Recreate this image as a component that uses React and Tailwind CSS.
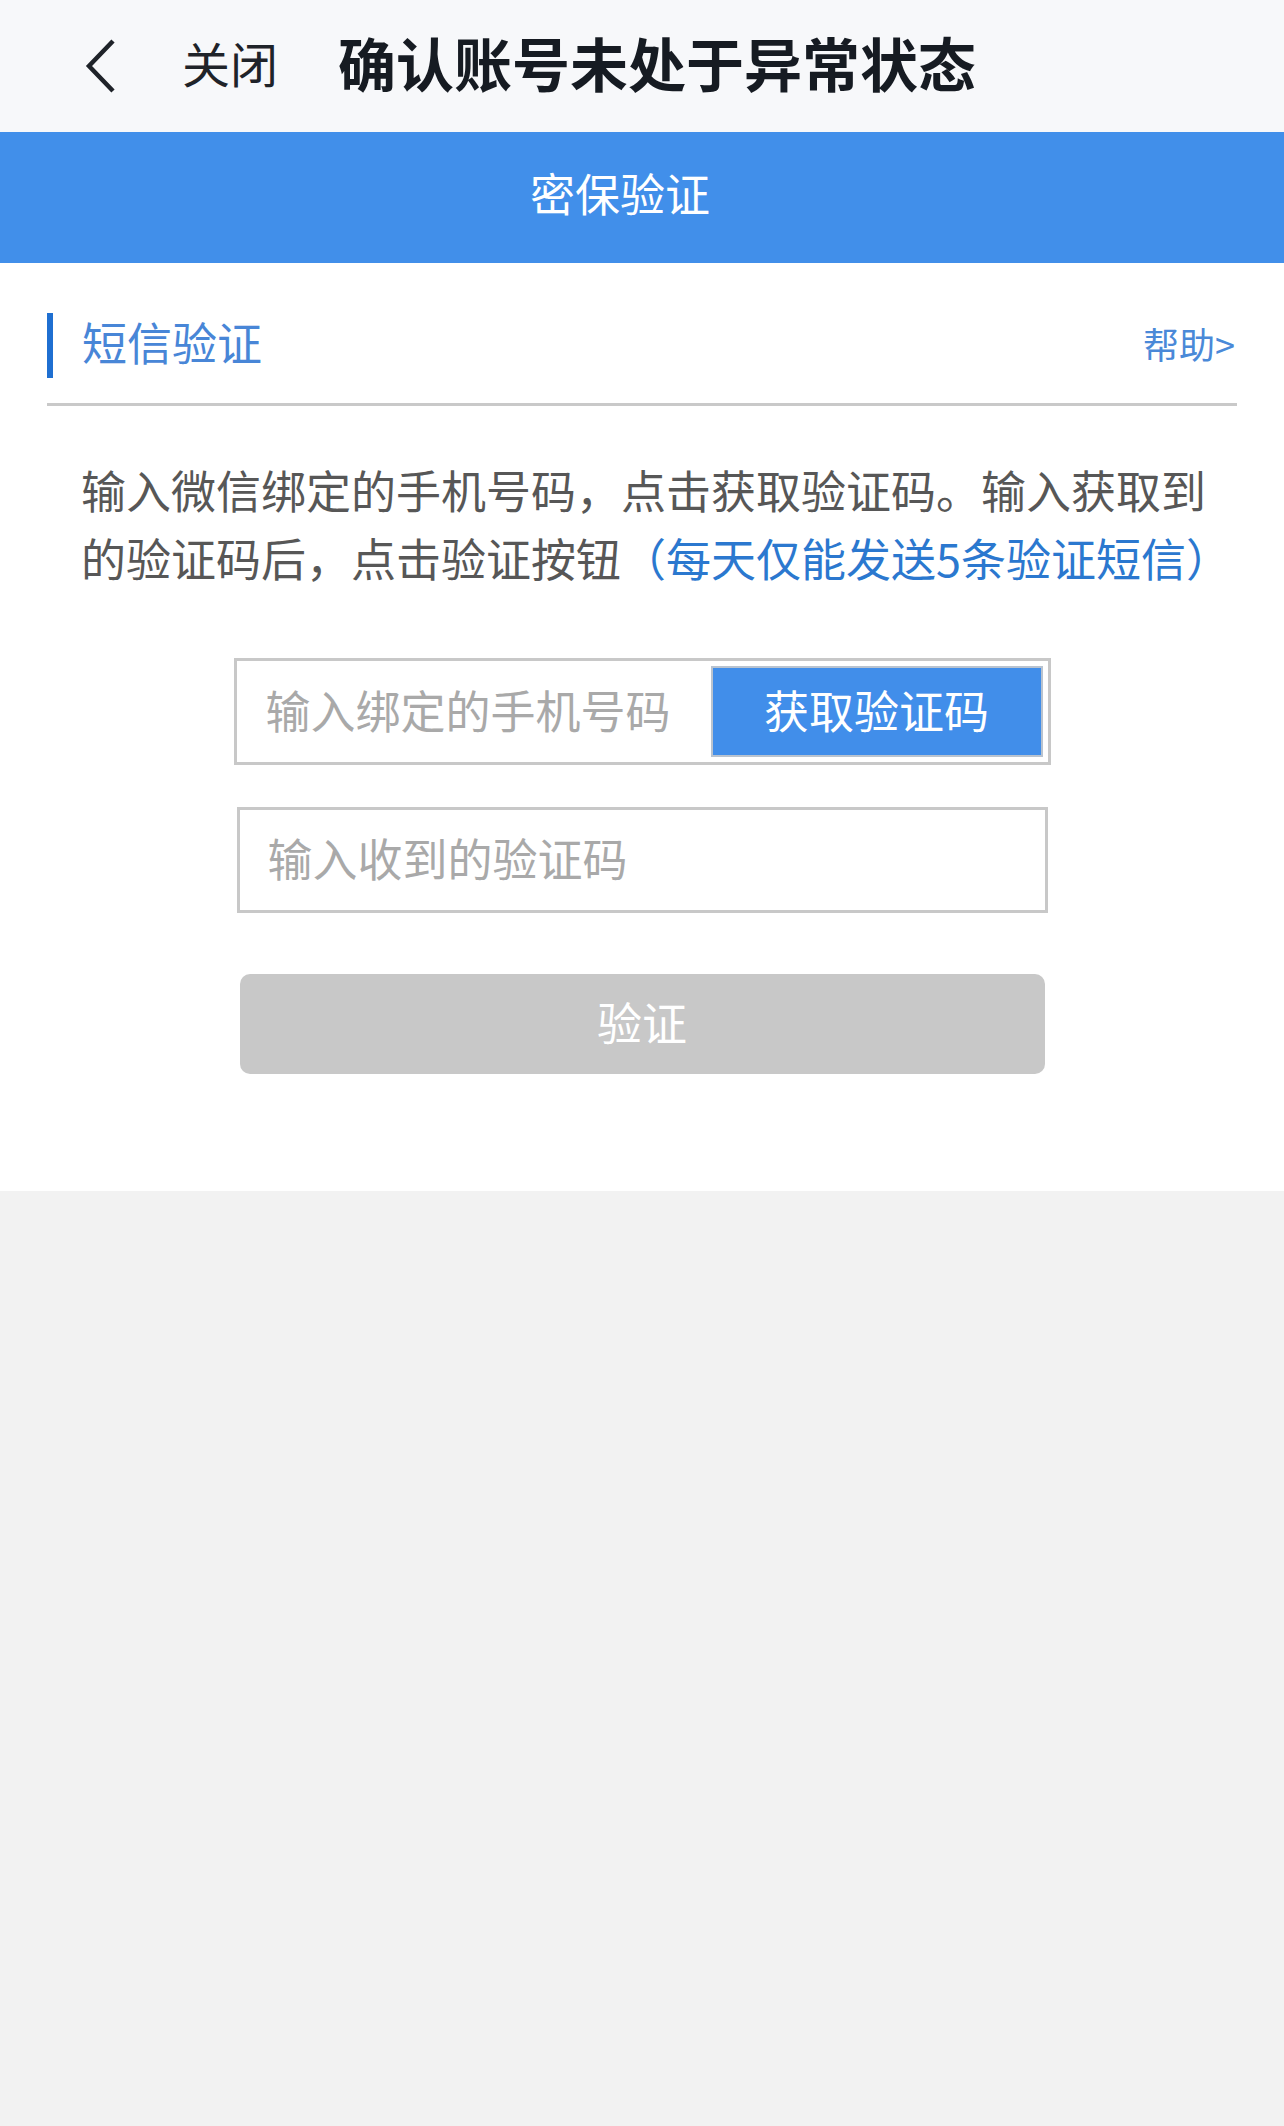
export default function App() {
  return (
    <div className="min-h-[2126px] w-full bg-[#f2f2f2] font-['Noto_Sans_CJK_SC','Noto_Sans',sans-serif]">
      {/* Top nav */}
      <div className="flex h-[132px] items-center bg-[#f7f8fa]">
        <div className="ml-[84px] flex h-[60px] w-[34px] items-center">
          <svg width="34" height="60" viewBox="0 0 34 60" fill="none">
            <polyline points="29,5 5,30 29,55" stroke="#1f2329" strokeWidth="4.5" strokeLinecap="butt" strokeLinejoin="miter" />
          </svg>
        </div>
        <div className="ml-[64px] pb-[8px] text-[48px] leading-none text-[#1f2329]">关闭</div>
        <div className="ml-[60px] pb-[8px] text-[58px] font-bold leading-none text-[#161b22]">确认账号未处于异常状态</div>
      </div>

      {/* Blue band */}
      <div className="flex h-[131px] items-center justify-center bg-[#418fea] pb-[10px] pr-[44px] text-[45px] leading-none text-white">
        密保验证
      </div>

      {/* White content */}
      <div className="bg-white pb-[117px] pt-[50px]">
        <div className="mx-[47px] flex h-[65px] items-center justify-between">
          <div className="flex h-[65px] items-center border-l-[6px] border-[#1f6fd1] pb-[8px] pl-[29px] text-[45px] leading-none text-[#4886d7]">
            短信验证
          </div>
          <div className="pb-[6px] pr-[2px] text-[36px] leading-none text-[#4a89d8]">帮助&gt;</div>
        </div>
        <div className="mx-[47px] mt-[25px] h-[3px] bg-[#c9c9c9]" />

        <p className="mt-[50px] pl-[81px] pr-[40px] text-[45px] leading-[68px] text-[#575757]">
          输入微信绑定的手机号码，点击获取验证码。输入获取到的验证码后，点击验证按钮<span className="text-[#2b78cf]">（每天仅能发送5条验证短信）</span>
        </p>

        {/* Phone input */}
        <div className="mx-auto mt-[66px] flex h-[107px] w-[817px] items-center justify-between border-[3px] border-[#c8c8c8] bg-white pr-[5px]">
          <div className="pb-[5px] pl-[29px] text-[45px] leading-none text-[#a9a9a9]">输入绑定的手机号码</div>
          <div className="flex h-[91px] w-[332px] items-center justify-center border-2 border-[#b9c3cf] bg-[#418eea] pb-[5px] text-[45px] leading-none text-white">
            获取验证码
          </div>
        </div>

        {/* Code input */}
        <div className="mx-auto mt-[42px] flex h-[106px] w-[811px] items-center border-[3px] border-[#c8c8c8] bg-white pb-[5px] pl-[28px] text-[45px] leading-none text-[#a9a9a9]">
          输入收到的验证码
        </div>

        {/* Verify button */}
        <div className="mx-auto mt-[61px] flex h-[100px] w-[805px] items-center justify-center rounded-[10px] bg-[#c8c8c8] pb-[5px] text-[45px] leading-none text-white">
          验证
        </div>
      </div>
    </div>
  );
}
